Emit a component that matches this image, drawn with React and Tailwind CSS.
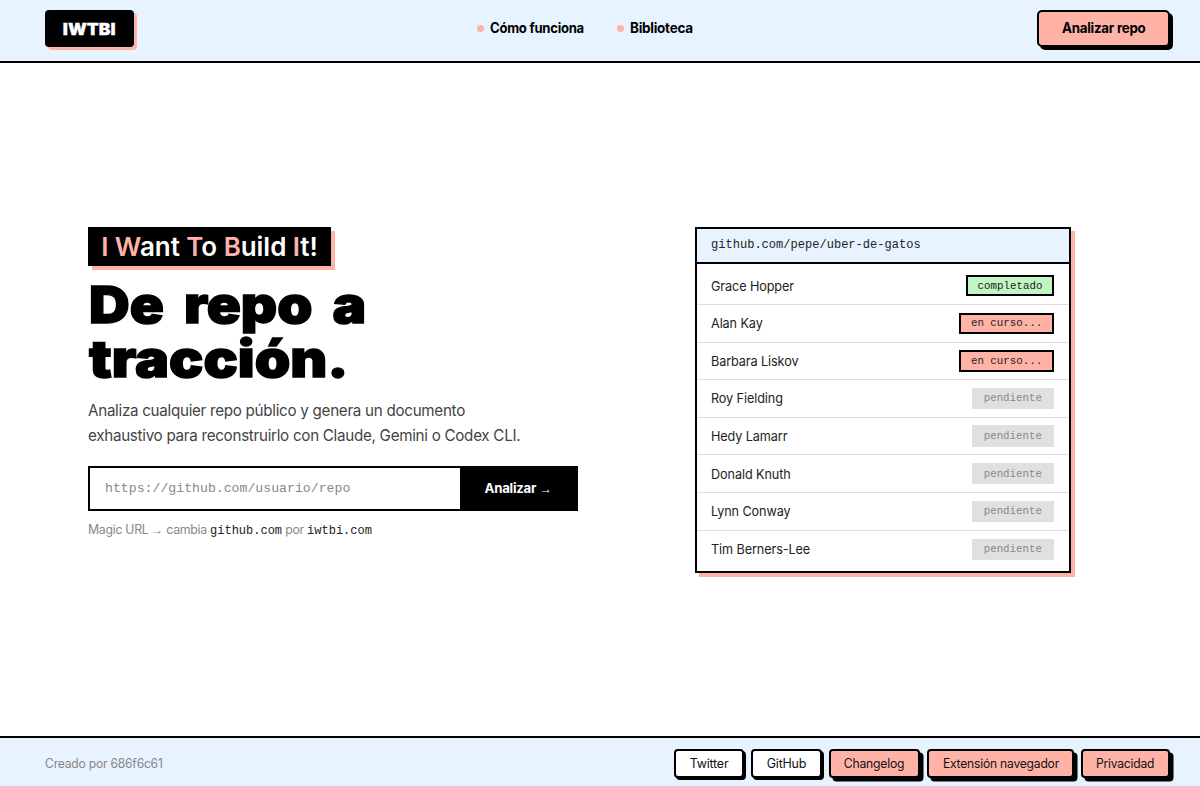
const people = [
  ["Grace Hopper", "completado"],
  ["Alan Kay", "en curso..."],
  ["Barbara Liskov", "en curso..."],
  ["Roy Fielding", "pendiente"],
  ["Hedy Lamarr", "pendiente"],
  ["Donald Knuth", "pendiente"],
  ["Lynn Conway", "pendiente"],
  ["Tim Berners-Lee", "pendiente"],
];

const statusStyles = {
  completado: "border-2 border-black bg-[#c1f5c1] px-[9.6px] text-[#222]",
  "en curso...": "border-2 border-black bg-[#ffb3a7] px-[9.8px] text-[#222]",
  pendiente: "bg-[#e0e0e0] px-3 text-[#888]",
};

const mono = "font-['Liberation_Mono',monospace]";

function Header() {
  return (
    <header className="flex h-[63px] shrink-0 items-start border-b-2 border-black bg-[#e7f3ff] pl-[45px] pr-[30px] pt-[10px]">
      <a className="flex h-[37px] w-[89px] items-center justify-center rounded-[4px] bg-black text-[16px] font-black text-white shadow-[3px_3px_0_#ffb3a7]">
        <span className="inline-block scale-x-[1.09] [-webkit-text-stroke:0.3px_white]">IWTBI</span>
      </a>
      <nav className="ml-[343px] flex h-[36px] items-center text-[14px] font-bold tracking-[-0.28px]">
        <a className="flex w-[140px] items-center gap-[6px] whitespace-nowrap">
          <i className="mt-px size-[7px] shrink-0 rounded-full bg-[#ffb3a7]" />
          <span className="-mt-px origin-left scale-x-[0.935]">Cómo funciona</span>
        </a>
        <a className="flex items-center gap-[6px] whitespace-nowrap">
          <i className="mt-px size-[7px] shrink-0 rounded-full bg-[#ffb3a7]" />
          <span className="-mt-px origin-left scale-x-[0.965]">Biblioteca</span>
        </a>
      </nav>
      <button className="ml-auto h-[37px] w-[133px] whitespace-nowrap rounded-[5px] border-2 border-black bg-[#ffb3a7] pb-[2px] text-[14px] font-bold tracking-[-0.28px] shadow-[3px_3px_0_#000]">
        <span className="inline-block scale-x-[0.955]">Analizar repo</span>
      </button>
    </header>
  );
}

function Hero() {
  return (
    <section className="w-[490px]">
      <div className="flex h-[39px] w-[243px] items-center justify-center whitespace-nowrap bg-black text-[26px] font-semibold tracking-[-0.05px] text-white shadow-[4px_4px_0_#ffb3a7]">
        <p>
          <b className="font-semibold text-[#ffb3a7]">I W</b>ant <b className="font-semibold text-[#ffb3a7]">T</b>o{" "}
          <b className="font-semibold text-[#ffb3a7]">B</b>uild <b className="font-semibold text-[#ffb3a7]">I</b>t!
        </p>
      </div>
      <h1 className="mt-[12px] whitespace-nowrap text-[51px] font-black leading-[54px] [-webkit-text-stroke:1.4px_black]">
        <span className="ml-px block w-fit origin-left scale-x-[1.105] [word-spacing:8px]">De repo a</span>
        <span className="ml-px block w-fit origin-left scale-x-[1.118]">tracción.</span>
      </h1>
      <p className="mt-[12px] w-fit origin-left scale-x-[0.949] whitespace-nowrap text-[16px] leading-[25px] tracking-[-0.3px] text-[#444]">
        Analiza cualquier repo público y genera un documento
        <br />
        exhaustivo para reconstruirlo con Claude, Gemini o Codex CLI.
      </p>
      <div className="mt-[18px] flex h-[45px] border-2 border-black">
        <div className={`flex flex-1 items-center pl-[15px] text-[13.2px] text-[#888] ${mono}`}>
          https://github.com/usuario/repo
        </div>
        <button className="w-[116px] whitespace-nowrap bg-black text-[13.5px] font-bold tracking-[-0.25px] text-white">
          <span className="inline-block scale-x-[0.98]">Analizar</span>{" "}
          <span className="font-['Liberation_Sans',sans-serif] text-[12px]">→</span>
        </button>
      </div>
      <p className="mt-[9px] w-fit origin-left scale-x-[0.985] whitespace-nowrap text-[12.5px] leading-[20px] tracking-[-0.3px] text-[#888]">
        Magic URL <span className="font-['Liberation_Sans',sans-serif] text-[12px]">→</span> cambia{" "}
        <code className={`text-[12.2px] tracking-normal text-[#222] ${mono}`}>github.com</code> por{" "}
        <code className={`text-[12.2px] tracking-normal text-[#222] ${mono}`}>iwtbi.com</code>
      </p>
    </section>
  );
}

function Panel() {
  return (
    <section className="h-[346px] w-[376px] border-2 border-black bg-white shadow-[4px_4px_0_#ffb3a7]">
      <div className={`flex h-[35px] items-center border-b-2 border-black bg-[#e7f3ff] pl-[14px] text-[12.05px] text-[#222] ${mono}`}>
        github.com/pepe/uber-de-gatos
      </div>
      <ul className="pt-[3.4px]">
        {people.map(([name, status]) => (
          <li key={name} className="flex h-[37.6px] items-center justify-between border-b border-[#ddd] pl-[14px] pr-[15px] text-[13.5px] tracking-[-0.1px] text-[#222] last:border-b-0">
            <span className="origin-left scale-x-[0.937]">{name}</span>
            <span className={`flex h-[21.5px] items-center text-[10.8px] tracking-normal ${mono} ${statusStyles[status]}`}>
              {status}
            </span>
          </li>
        ))}
      </ul>
    </section>
  );
}

function Footer() {
  const base = "flex h-[29px] items-center justify-center whitespace-nowrap rounded-[4px] border-2 border-black ";
  const light = base + "bg-white shadow-[2px_2px_0_#000] ";
  const pink = base + "bg-[#ffb3a7] shadow-[3.5px_3.5px_0_#000] ";
  return (
    <footer className="flex h-[50px] shrink-0 items-start justify-between border-t-2 border-black bg-[#e7f3ff] pl-[45px] pr-[30px] pt-[11.4px] text-[12.5px] tracking-[-0.22px]">
      <span className="origin-left scale-x-[0.968] leading-[29px] text-[#888]">Creado por 686f6c61</span>
      <nav className="flex gap-[7px] text-[#111]">
        <a className={light + "w-[70px]"}>Twitter</a>
        <a className={light + "w-[71px]"}>GitHub</a>
        <a className={pink + "w-[91px]"}>
          <span className="scale-x-[0.975]">Changelog</span>
        </a>
        <a className={pink + "w-[147px]"}>
          <span className="scale-x-[0.968]">Extensión navegador</span>
        </a>
        <a className={pink + "w-[89px]"}>
          <span className="scale-x-[0.968]">Privacidad</span>
        </a>
      </nav>
    </footer>
  );
}

export default function App() {
  return (
    <div className="flex h-[786px] w-[1200px] flex-col overflow-hidden bg-white font-['Inter',sans-serif] text-black">
      <Header />
      <main className="flex flex-1 items-start gap-[117px] pl-[88px] pt-[164px]">
        <Hero />
        <Panel />
      </main>
      <Footer />
    </div>
  );
}
